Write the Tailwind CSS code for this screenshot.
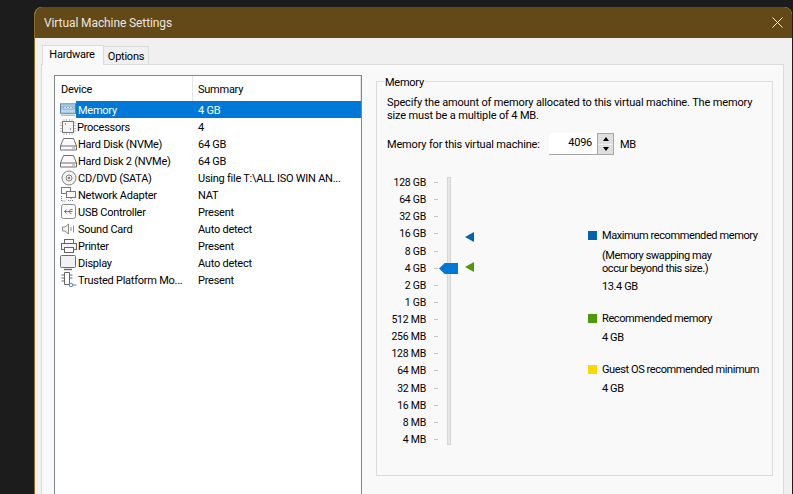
<!DOCTYPE html>
<html lang="en">
<head>
    <meta charset="UTF-8">
    <script src="https://cdn.jsdelivr.net/npm/@tailwindcss/browser@4"></script>
    <title>Virtual Machine Settings</title>
</head>
<body class="h-[494px] w-[793px] overflow-hidden bg-[#1c1c1c] font-['Roboto',sans-serif] text-[11px] leading-[13px] tracking-[-0.25px] text-black">
    <div class="ml-[34px] mt-[7px] flex h-[487px] w-[758px] flex-col overflow-hidden rounded-t-[8px] border-l border-[#8a6a25] bg-[#f0f0f0]">
        <!-- Title bar -->
        <div class="-ml-px flex h-[31px] shrink-0 items-center justify-between bg-[#634917] pl-[10px] pr-[9px] text-[12px] tracking-[-0.1px] text-[#e9e6df]">
            <span class="pt-[2px]">Virtual Machine Settings</span>
            <svg class="h-[11px] w-[11px]" viewBox="0 0 11 11" fill="none" stroke="#f2f0ea" stroke-width="1"><path d="M0.5 0.5 10.500 10.500M10.500 0.5 0.5 10.500"/></svg>
        </div>
        <!-- Tabs -->
        <div class="relative z-10 flex h-[26px] shrink-0 items-end pl-[7px]">
            <div class="-mb-px flex h-[20px] w-[62px] items-center justify-center border border-b-0 border-[#dcdcdc] bg-[#f9f9f9] pb-[2px] pr-[2px]">Hardware</div>
            <div class="flex h-[18px] w-[45px] items-center justify-center border border-b-0 border-l-0 border-[#dcdcdc] bg-[#f0f0f0] pt-[2px]">Options</div>
        </div>
        <!-- Tab panel -->
        <div class="ml-[6px] mr-[8px] flex flex-1 gap-[14px] border border-[#dcdcdc] bg-[#f9f9f9] pl-[12px] pr-[9px] pt-[10px]">
            <!-- Device list -->
            <div class="h-[420px] w-[308px] shrink-0 whitespace-nowrap border border-[#82878c] bg-white [&>div>span]:pt-[2px]">
                <div class="flex h-[25px] items-center">
                    <div class="flex h-full w-[138px] items-center border-r border-[#e5e5e5] pl-[6px] pt-[2px]">Device</div>
                    <div class="flex h-full flex-1 items-center border-r border-[#e5e5e5] pl-[5px] pt-[2px]">Summary</div>
                </div>
                <div class="flex h-[17px] items-center">
                    <svg class="ml-[5px] h-[13px] w-[16px] shrink-0" viewBox="0 0 17 13" fill="none"><rect x="0.5" y="0.5" width="16" height="10" fill="#bcd8ee" stroke="#4b7ea8"/><path d="M2 3h13v3H2z" fill="#e8f2fa" stroke="#5c8db5" stroke-width=".7"/><path d="M4 4v1M7 4v1M10 4v1M13 4v1" stroke="#2c6390"/><path d="M1 12.500h15" stroke="#6d98ba"/></svg>
                    <div class="flex h-full flex-1 items-center bg-[#0078d7] pt-[2px] text-white">
                        <span class="w-[122px] shrink-0 pl-[2px]">Memory</span><span>4 GB</span>
                    </div>
                </div>
                <div class="flex h-[17px] items-center">
                    <svg class="ml-[5px] h-[16px] w-[16px] shrink-0" viewBox="0 0 16 16" fill="none" stroke="#777"><rect x="2.500" y="2.500" width="11" height="11" fill="#f4f4f4"/><path d="M4 .5v2M6.500 .5v2M9.500 .5v2M12 .5v2M4 13.500v2M6.500 13.500v2M9.500 13.500v2M12 13.500v2M.5 4h2M.5 6.500h2M.5 9.500h2M.5 12h2M13.500 4h2M13.500 6.500h2M13.500 9.500h2M13.500 12h2" stroke-dasharray="1 .5"/><path d="M5 5h1M10 10h1" stroke="#333"/></svg>
                    <span class="w-[122px] shrink-0 pl-px">Processors</span><span>4</span>
                </div>
                <div class="flex h-[17px] items-center">
                    <svg class="ml-[5px] h-[14px] w-[17px] shrink-0" viewBox="0 0 17 14" fill="none" stroke="#6e6e6e"><path d="M3.500 1.500h10l3 7.500v4h-16V9z" fill="#fafafa"/><path d="M.5 9h16" /><path d="M12 11h3" stroke="#999"/></svg>
                    <span class="w-[121px] shrink-0 pl-px">Hard Disk (NVMe)</span><span>64 GB</span>
                </div>
                <div class="flex h-[17px] items-center">
                    <svg class="ml-[5px] h-[14px] w-[17px] shrink-0" viewBox="0 0 17 14" fill="none" stroke="#6e6e6e"><path d="M3.500 1.500h10l3 7.500v4h-16V9z" fill="#fafafa"/><path d="M.5 9h16" /><path d="M12 11h3" stroke="#999"/></svg>
                    <span class="w-[121px] shrink-0 pl-px">Hard Disk 2 (NVMe)</span><span>64 GB</span>
                </div>
                <div class="flex h-[17px] items-center">
                    <svg class="ml-[6px] h-[16px] w-[16px] shrink-0" viewBox="0 0 16 16" fill="none" stroke="#808080"><circle cx="8" cy="8" r="7" fill="#f3f3f3"/><circle cx="8" cy="8" r="3" fill="#fff"/><circle cx="8" cy="8" r="1" fill="#888"/></svg>
                    <span class="w-[121px] shrink-0 pl-px">CD/DVD (SATA)</span><span>Using file T:\ALL ISO WIN AN...</span>
                </div>
                <div class="flex h-[17px] items-center">
                    <svg class="ml-[6px] h-[16px] w-[16px] shrink-0" viewBox="0 0 16 16" fill="none" stroke="#777"><rect x=".5" y=".5" width="9" height="6" fill="#fafafa"/><rect x="5.500" y="4.500" width="9" height="6" fill="#fafafa"/><path d="M10 11v2M7 13.500h6M.5 9v5h5" stroke-dasharray="1 1"/></svg>
                    <span class="w-[121px] shrink-0 pl-px">Network Adapter</span><span>NAT</span>
                </div>
                <div class="flex h-[17px] items-center">
                    <svg class="ml-[6px] h-[16px] w-[16px] shrink-0" viewBox="0 0 16 16" fill="none" stroke="#8a8a8a"><rect x=".5" y=".5" width="14" height="14" rx="2" fill="#fafafa"/><path d="M3.500 7.500h8M5.500 5.500l-2 2 2 2M8 7.500l1.500-2h2M8 7.500l1.500 2h1" stroke="#777"/></svg>
                    <span class="w-[121px] shrink-0 pl-px">USB Controller</span><span>Present</span>
                </div>
                <div class="flex h-[17px] items-center">
                    <svg class="ml-[6px] h-[16px] w-[16px] shrink-0" viewBox="0 0 16 16" fill="none" stroke="#8a8a8a"><path d="M1.500 6v4h2.500l3.500 3V3L4 6z" fill="#f5f5f5"/><path d="M10 6v4M12.500 4.500v7"/></svg>
                    <span class="w-[121px] shrink-0 pl-px">Sound Card</span><span>Auto detect</span>
                </div>
                <div class="flex h-[17px] items-center">
                    <svg class="ml-[6px] h-[16px] w-[16px] shrink-0" viewBox="0 0 16 16" fill="none" stroke="#666"><rect x="3.500" y="1.500" width="9" height="4" fill="#fff"/><rect x=".5" y="5.500" width="15" height="6" fill="#f5f5f5"/><rect x="3.500" y="9.500" width="9" height="5" fill="#fff"/></svg>
                    <span class="w-[121px] shrink-0 pl-px">Printer</span><span>Present</span>
                </div>
                <div class="flex h-[17px] items-center">
                    <svg class="ml-[5px] h-[16px] w-[17px] shrink-0" viewBox="0 0 17 16" fill="none" stroke="#6e6e6e"><rect x=".5" y=".5" width="15" height="12" rx="1" fill="#f2f2f2"/><path d="M4 14.500h8" stroke-width="1.500"/></svg>
                    <span class="w-[121px] shrink-0 pl-px">Display</span><span>Auto detect</span>
                </div>
                <div class="flex h-[17px] items-center">
                    <svg class="ml-[6px] h-[16px] w-[16px] shrink-0" viewBox="0 0 16 16" fill="none" stroke="#666"><path d="M3.500 .5h5v12h-5zM.5 3h3M.5 6h3M.5 9h3M8.500 3h3M8.500 6h3"/><circle cx="10" cy="13" r="1.800" fill="#fff" stroke="#5a87a8"/><path d="M12 13h3.500" stroke="#5a87a8"/></svg>
                    <span class="w-[121px] shrink-0 pl-px">Trusted Platform Mo...</span><span>Present</span>
                </div>
            </div>
            <!-- Memory group -->
            <div class="relative mt-[6px] flex h-[395px] w-[397px] shrink-0 flex-col border border-[#dcdcdc] px-[10px] pt-[14px]">
                <span class="absolute left-[7px] top-[-6px] bg-[#f9f9f9] px-px">Memory</span>
                <p class="w-[375px] tracking-[-0.15px]">Specify the amount of memory allocated to this virtual machine. The memory<br>size must be a multiple of 4 MB.</p>
                <div class="mt-[11px] flex h-[22px] items-center">
                    <span class="w-[162px] shrink-0 whitespace-nowrap tracking-[-0.17px]">Memory for this virtual machine:</span>
                    <div class="flex h-[22px] w-[65px] border-b border-r border-[#a8a8a8] bg-white">
                        <div class="flex-1 pr-[5px] pt-[3px] text-right">4096</div>
                        <div class="flex w-[16px] flex-col gap-px border-l border-t border-[#a8a8a8] bg-[#f0f0f0]">
                            <div class="flex flex-1 items-center justify-center bg-[#dfdfdf]"><div class="h-0 w-0 border-x-[3.500px] border-b-[4px] border-x-transparent border-b-black"></div></div>
                            <div class="flex flex-1 items-center justify-center bg-[#dfdfdf]"><div class="h-0 w-0 border-x-[3.500px] border-t-[4px] border-x-transparent border-t-black"></div></div>
                        </div>
                    </div>
                    <span class="ml-[6px]">MB</span>
                </div>
                <div class="mt-[22px] flex">
                    <!-- Slider -->
                    <div class="relative flex h-[268px] w-[201px] shrink-0">
                        <div class="mt-[-3px] grid w-[39px] grid-rows-[repeat(16,17.13px)] items-center whitespace-nowrap text-right text-[10.5px]">
                            <span>128 GB</span><span>64 GB</span><span>32 GB</span><span>16 GB</span><span>8 GB</span><span>4 GB</span><span>2 GB</span><span>1 GB</span><span>512 MB</span><span>256 MB</span><span>128 MB</span><span>64 MB</span><span>32 MB</span><span>16 MB</span><span>8 MB</span><span>4 MB</span>
                        </div>
                        <div class="ml-[8px] mt-[-3px] grid w-[4px] grid-rows-[repeat(16,17.13px)] items-center">
                            <i class="h-px bg-[#c4c4c4]"></i><i class="h-px bg-[#c4c4c4]"></i><i class="h-px bg-[#c4c4c4]"></i><i class="h-px bg-[#c4c4c4]"></i><i class="h-px bg-[#c4c4c4]"></i><i class="h-px bg-[#c4c4c4]"></i><i class="h-px bg-[#c4c4c4]"></i><i class="h-px bg-[#c4c4c4]"></i><i class="h-px bg-[#c4c4c4]"></i><i class="h-px bg-[#c4c4c4]"></i><i class="h-px bg-[#c4c4c4]"></i><i class="h-px bg-[#c4c4c4]"></i><i class="h-px bg-[#c4c4c4]"></i><i class="h-px bg-[#c4c4c4]"></i><i class="h-px bg-[#c4c4c4]"></i><i class="h-px bg-[#c4c4c4]"></i>
                        </div>
                        <div class="ml-[9px] h-[268px] w-[4px] border border-[#d6d6d6] bg-[#e6e6e6]"></div>
                        <div class="absolute left-[52px] top-[86px] h-[11px] w-[19px] bg-[#0078d7] [clip-path:polygon(0_50%,30%_0,100%_0,100%_100%,30%_100%)]"></div>
                        <div class="absolute left-[78px] top-[55px] h-0 w-0 border-y-[5px] border-r-[9px] border-y-transparent border-r-[#0063b1]"></div>
                        <div class="absolute left-[78px] top-[85px] h-0 w-0 border-y-[5px] border-r-[9px] border-y-transparent border-r-[#4a9a0a]"></div>
                    </div>
                    <!-- Legend -->
                    <div class="mt-[52px] flex flex-col whitespace-nowrap tracking-[-0.4px]">
                        <div class="flex h-[13px] items-center gap-[5px]"><i class="h-[9px] w-[9px] bg-[#0063b1]"></i><span>Maximum recommended memory</span></div>
                        <div class="ml-[14px] mt-[7px]">(Memory swapping may<br>occur beyond this size.)</div>
                        <div class="ml-[14px] mt-[5px]">13.4 GB</div>
                        <div class="mt-[19px] flex h-[13px] items-center gap-[5px]"><i class="h-[9px] w-[9px] bg-[#4a9a0a]"></i><span>Recommended memory</span></div>
                        <div class="ml-[14px] mt-[6px]">4 GB</div>
                        <div class="mt-[19px] flex h-[13px] items-center gap-[5px]"><i class="h-[9px] w-[9px] bg-[#ffd800]"></i><span>Guest OS recommended minimum</span></div>
                        <div class="ml-[14px] mt-[6px]">4 GB</div>
                    </div>
                </div>
            </div>
        </div>
    </div>
</body>
</html>
